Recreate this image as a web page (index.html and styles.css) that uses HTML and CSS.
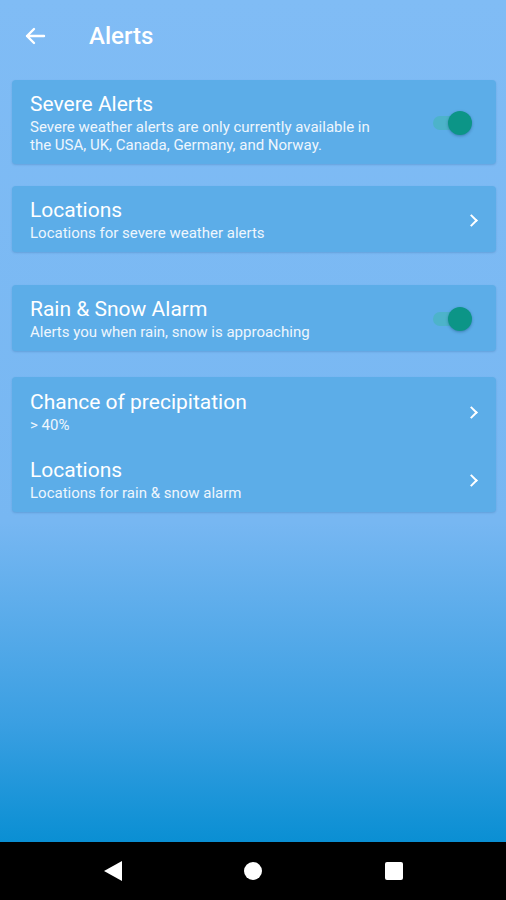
FILE: index.html
```html
<!DOCTYPE html>
<html lang="en">
<head>
    <meta charset="UTF-8">
    <title>Alerts</title>
    <link rel="stylesheet" href="styles.css">
</head>
<body>
<div class="app">
    <div class="toolbar">
        <svg class="back" width="24" height="24" viewBox="0 0 24 24">
            <path d="M21 12H4M11 5l-7 7 7 7" fill="none" stroke="#fff" stroke-width="2.4" stroke-linecap="round" stroke-linejoin="round"/>
        </svg>
        <span class="title">Alerts</span>
    </div>

    <div class="card card-severe">
        <div class="row">
            <div class="text">
                <div class="label">Severe Alerts</div>
                <div class="sub">Severe weather alerts are only currently available in the USA, UK, Canada, Germany, and Norway.</div>
            </div>
            <div class="switch"><span class="knob"></span></div>
        </div>
    </div>

    <div class="card card-locations">
        <div class="row">
            <div class="text">
                <div class="label">Locations</div>
                <div class="sub">Locations for severe weather alerts</div>
            </div>
            <span class="chevron"></span>
        </div>
    </div>

    <div class="card card-rain">
        <div class="row">
            <div class="text">
                <div class="label">Rain &amp; Snow Alarm</div>
                <div class="sub">Alerts you when rain, snow is approaching</div>
            </div>
            <div class="switch"><span class="knob"></span></div>
        </div>
    </div>

    <div class="card card-alarm">
        <div class="row">
            <div class="text">
                <div class="label">Chance of precipitation</div>
                <div class="sub">&gt; 40%</div>
            </div>
            <span class="chevron"></span>
        </div>
        <div class="row">
            <div class="text">
                <div class="label">Locations</div>
                <div class="sub">Locations for rain &amp; snow alarm</div>
            </div>
            <span class="chevron"></span>
        </div>
    </div>
</div>
<div class="navbar">
    <span class="nav-back"></span>
    <span class="nav-home"></span>
    <span class="nav-recent"></span>
</div>
</body>
</html>
```

FILE: styles.css
```css
* {
    padding: 0;
    margin: 0;
    box-sizing: border-box;
}

body {
    width: 506px;
    height: 900px;
    font-family: Roboto, "Noto Sans", sans-serif;
    color: #fff;
    overflow: hidden;
}

.app {
    height: 842px;
    padding: 0 10px 0 12px;
    background: linear-gradient(#80bcf5 0%, #77b7f2 62%, #3a9fe2 86%, #0a8fd3 100%);
}

.toolbar {
    height: 72px;
    display: flex;
    align-items: center;
    padding-left: 11px;
}

.toolbar .back {
    margin-right: 42px;
}

.toolbar .title {
    font-size: 24px;
    font-weight: 500;
}

.card {
    background: #5cade8;
    border-radius: 4px;
    box-shadow: 0 1px 2px rgba(30, 90, 150, 0.25);
}

.card-severe {
    margin-top: 8px;
}

.card-locations {
    margin-top: 22px;
}

.card-rain {
    margin-top: 33px;
}

.card-alarm {
    margin-top: 26px;
}

.row {
    display: flex;
    align-items: center;
    padding: 12px 17px 10px 18px;
}

.card-alarm .row:first-child {
    padding-top: 13px;
    padding-bottom: 12px;
}

.text {
    flex: 1;
}

.label {
    font-size: 21px;
    line-height: 24px;
}

.sub {
    margin-top: 2px;
    font-size: 15px;
    line-height: 18px;
    color: #eef6fd;
}

.card-severe .sub {
    padding-right: 40px;
}

.switch {
    position: relative;
    width: 37px;
    height: 14px;
    margin-right: 9px;
    border-radius: 7px;
    background: #4db3ca;
}

.switch .knob {
    position: absolute;
    right: -2px;
    top: -5px;
    width: 24px;
    height: 24px;
    border-radius: 50%;
    background: #0c9587;
    box-shadow: 0 1px 3px rgba(0, 40, 80, 0.35);
}

.chevron {
    width: 9px;
    height: 9px;
    margin-right: 3px;
    border-top: 2.2px solid #fff;
    border-right: 2.2px solid #fff;
    transform: rotate(45deg);
}

.navbar {
    height: 58px;
    background: #000;
    display: flex;
    align-items: center;
    justify-content: center;
}

.nav-back {
    width: 0;
    height: 0;
    border-top: 10px solid transparent;
    border-bottom: 10px solid transparent;
    border-right: 18px solid #fff;
}

.nav-home {
    width: 18px;
    height: 18px;
    margin: 0 123px 0 122px;
    border-radius: 50%;
    background: #fff;
}

.nav-recent {
    width: 18px;
    height: 18px;
    border-radius: 2px;
    background: #fff;
}
```
